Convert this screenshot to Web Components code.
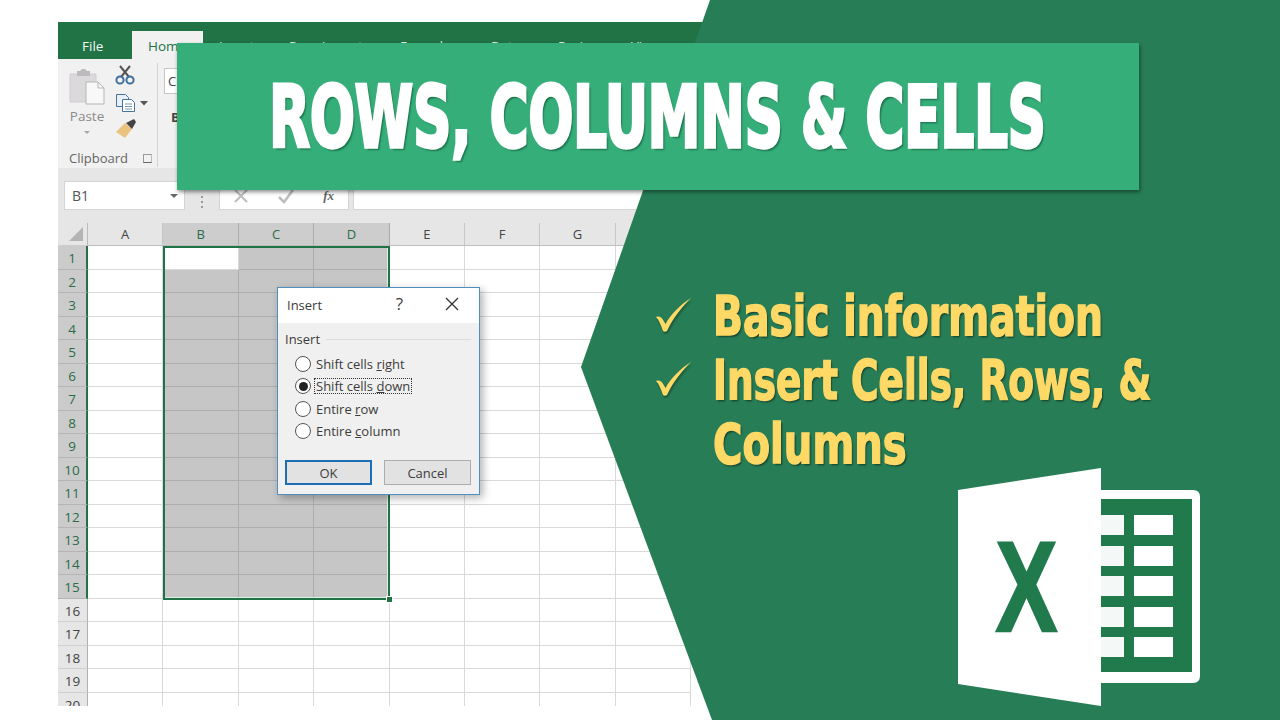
<!DOCTYPE html>
<html lang="en">
<head>
<meta charset="utf-8">
<title>Rows, Columns & Cells</title>
<style>
  html, body { margin: 0; padding: 0; background: #fff; }
  body { width: 1280px; height: 720px; overflow: hidden; font-family: "Liberation Sans", sans-serif; }
</style>
</head>
<body>
<x-thumbnail>
  <x-excel-window></x-excel-window>
  <x-insert-dialog></x-insert-dialog>
  <x-promo-panel>
    <x-check-item style="--squeeze:.78">Basic information</x-check-item>
    <x-check-item style="--squeeze:.745">Insert Cells, Rows, &amp;<br><span style="display:inline-block;transform:scaleX(1.07);transform-origin:0 0">Columns</span></x-check-item>
  </x-promo-panel>
  <x-title-banner>ROWS, COLUMNS &amp; CELLS</x-title-banner>
  <x-excel-logo></x-excel-logo>
</x-thumbnail>

<script>
/* the stage: a free canvas, the pieces overlap like in a slide */
class XThumbnail extends HTMLElement {
  constructor() {
    super();
    this.attachShadow({ mode: 'open' }).innerHTML = `
      <style>
        :host { display: block; position: relative; width: 1280px; height: 720px; overflow: hidden; background: #fff; }
      </style>
      <slot></slot>`;
  }
}

class XExcelWindow extends HTMLElement {
  constructor() {
    super();
    this.attachShadow({ mode: 'open' }).innerHTML = `
      <style>
        *, *::before, *::after { box-sizing: border-box; }
        :host {
          display: flex; flex-direction: column;
          width: 660px; height: 684px; margin: 22px 0 0 58px;
          font-family: "Open Sans", "Liberation Sans", sans-serif;
          color: #444; overflow: hidden; background: #fff;
        }
        #tabs { display: flex; height: 37px; flex: none; background: #217346; color: #e6f1ea; font-size: 13px; }
        #file { width: 74px; padding: 15px 0 0 24px; color: #f2f7f4; font-size: 13.5px; }
        #home { width: 71px; margin-top: 9px; padding: 6px 0 0 16px; background: #f1f1f1; color: #217346; font-size: 13.5px; }
        #others { display: flex; padding-top: 15px; font-size: 13px; }
        #others div { white-space: nowrap; }
        #ribbon { height: 109px; flex: none; display: flex; background: #f1f1f1; }
        #clip { width: 100px; height: 104px; border-right: 1px solid #d2d2d2; margin-top: 4px; display: grid; grid-template-columns: 52px 48px; grid-template-rows: 78px 1fr; }
        #paste { display: flex; flex-direction: column; align-items: center; padding: 5px 0 0 6px; font-size: 13.5px; line-height: 18px; color: #8b8b8b; }
        #paste svg { display: block; margin-bottom: 2px; }
        #arrow { width: 0; height: 0; margin-top: 6px; border: 3px solid transparent; border-top-color: #a8a8a8; }
        #tools svg { display: block; }
        #cliplabel { grid-column: 1 / 3; display: flex; justify-content: space-between; align-items: center; padding: 8px 6px 0 11px; font-size: 13px; color: #666; }
        #launch { width: 9px; height: 9px; border-left: 1px solid #999; border-top: 1px solid #999; border-right: 1px solid #bbb; border-bottom: 1px solid #666; }
        #font { padding: 9px 0 0 6px; font-size: 13px; }
        #fontbox { width: 40px; height: 26px; background: #fff; border: 1px solid #c6c6c6; padding: 3px 0 0 3px; }
        #bold { margin: 14px 0 0 7px; font-weight: 700; }
        #formula { height: 55px; flex: none; background: #e6e6e6; display: flex; padding: 13px 0 0 6px; }
        .box { height: 29px; background: #fff; border: 1px solid #d4d4d4; }
        #name { width: 121px; display: flex; justify-content: space-between; align-items: center; padding: 0 6px 0 7px; font-size: 14px; color: #555; }
        #name i { width: 0; height: 0; border: 4.5px solid transparent; border-top-color: #666; border-bottom: 0; }
        #dots { width: 34px; display: flex; flex-direction: column; align-items: center; justify-content: center; gap: 3px; }
        #dots b { width: 2px; height: 2px; background: #999; }
        #fx { width: 130px; display: flex; align-items: center; justify-content: space-between; padding: 0 14px 0 13px; color: #b9b9b9; }
        #fx em { font: italic 700 13px "Liberation Serif", serif; color: #666; }
        #input { margin-left: 4px; flex: 1; }
      </style>
      <div id="tabs">
        <div id="file">File</div>
        <div id="home">Home</div>
        <div id="others">
          <div style="width:70px;padding-left:16px">Insert</div>
          <div style="width:111px;padding-left:16px">Page Layout</div>
          <div style="width:91px;padding-left:16px">Formulas</div>
          <div style="width:67px;padding-left:16px">Data</div>
          <div style="width:73px;padding-left:16px">Review</div>
          <div style="padding-left:16px">View</div>
        </div>
      </div>
      <div id="ribbon">
        <div id="clip">
          <div id="paste">
            <svg width="36" height="37" viewBox="0 0 36 37">
              <path d="M1 6h26v28H1z" fill="#dcd9dc" stroke="#cfcdcf"/>
              <path d="M8 6V3h3l2-2h3l2 2h3v5H8z" fill="#bcbabc"/>
              <path d="M17 14h12l6 6v16H17z" fill="#f8f8f8" stroke="#b5b5b5"/>
              <path d="M29 14v6h6" fill="none" stroke="#b5b5b5"/>
            </svg>
            <div>Paste</div>
            <div id="arrow"></div>
          </div>
          <div id="tools">
            <svg width="48" height="78" viewBox="0 0 48 78">
              <g fill="none" stroke-width="2">
                <path d="M11 14 20 3M19 14 10 3" stroke="#555"/>
                <circle cx="10" cy="17" r="3.600" stroke="#3f6f9a"/><circle cx="20" cy="17" r="3.600" stroke="#3f6f9a"/>
              </g>
              <g fill="#fff" stroke="#44739c">
                <path d="M6.500 31.500h9l3 3v9h-12z" fill="#e8eff6"/>
                <path d="M12.500 36.500h9l3 3v9h-12z"/>
                <path d="M15 41h7M15 43.500h7M15 46h7" stroke="#7a97b3"/>
              </g>
              <path d="M30 38h8l-4 4.500z" fill="#555"/>
              <path d="M6 69l9-9 7 6-7 9z" fill="#ecc27f"/>
              <path d="M16 60l8-4 2 3-4 7z" fill="#444"/>
            </svg>
          </div>
          <div id="cliplabel"><span>Clipboard</span><span id="launch"></span></div>
        </div>
        <div id="font">
          <div id="fontbox">C</div>
          <div id="bold">B</div>
        </div>
      </div>
      <div id="formula">
        <div id="name" class="box">B1<i></i></div>
        <div id="dots"><b></b><b></b><b></b></div>
        <div id="fx" class="box">
          <svg width="16" height="16" viewBox="0 0 16 16"><path d="M2 2l12 12M14 2 2 14" stroke="#bdbdbd" stroke-width="2"/></svg>
          <svg width="18" height="16" viewBox="0 0 18 16"><path d="M2 9l5 5L16 2" fill="none" stroke="#bdbdbd" stroke-width="2.500"/></svg>
          <em>fx</em>
        </div>
        <div id="input" class="box"></div>
      </div>
      <x-sheet></x-sheet>`;
  }
}

/* spreadsheet: 8 columns, 20 rows, B1:D15 selected */
class XSheet extends HTMLElement {
  constructor() {
    super();
    let cells = '<div class="corner"><i></i></div>';
    const cols = ['A', 'B', 'C', 'D', 'E', 'F', 'G', 'H'];
    cols.forEach((c, i) => {
      const on = i > 0 && i < 4;
      cells += `<div class="colhead ${on ? 'on' : ''}">${c}</div>`;
    });
    for (let r = 1; r <= 20; r++) {
      cells += `<div class="rowhead ${r <= 15 ? 'on' : ''}">${r}</div>`;
      cols.forEach((c, i) => {
        const on = r <= 15 && i > 0 && i < 4 && !(r === 1 && i === 1);
        cells += `<div class="cell ${on ? 'on' : ''}"></div>`;
      });
    }
    this.attachShadow({ mode: 'open' }).innerHTML = `
      <style>
        *, *::before, *::after { box-sizing: border-box; }
        :host { display: block; flex: 1; position: relative; overflow: hidden; background: #fff; font-family: "Open Sans", "Liberation Sans", sans-serif; }
        #grid {
          display: grid;
          grid-template-columns: 30px repeat(8, 75.4px);
          grid-template-rows: 23px repeat(20, 23.5px);
        }
        .corner { background: #e6e6e6; border-right: 1px solid #bbb; border-bottom: 1px solid #ccc; position: relative; }
        .corner i { position: absolute; right: 4px; bottom: 4px; width: 0; height: 0; border-left: 14px solid transparent; border-bottom: 14px solid #b4b4b4; }
        .colhead { background: #e6e6e6; border-right: 1px solid #c6c6c6; border-bottom: 1px solid #bdbdbd; text-align: center; font-size: 13px; line-height: 22px; color: #444; }
        .colhead.on { background: #cdcdcd; color: #2b6b49; border-right-color: #ababab; }
        .rowhead { background: #e6e6e6; border-right: 1px solid #b0b0b0; border-bottom: 1px solid #d0d0d0; text-align: center; font-size: 13.5px; line-height: 24px; color: #444; }
        .rowhead.on { background: #cbcbcb; color: #2b6b49; border-right: 2px solid #217346; border-bottom-color: #b5b5b5; }
        .cell { border-right: 1px solid #d9d9d9; border-bottom: 1px solid #d9d9d9; }
        .cell.on { background: #c6c6c6; border-right-color: #adadad; border-bottom-color: #adadad; }
        #selection {
          position: absolute; left: 105px; top: 23px; width: 227.200px; height: 353.500px;
          border: 2px solid #217346; box-shadow: inset 0 -1px 0 #dcefe3, inset -1px 0 0 #dcefe3;
          pointer-events: none;
        }
        #handle { position: absolute; right: -5px; bottom: -5px; width: 7px; height: 7px; background: #217346; border: 1px solid #fff; box-sizing: content-box; width: 5px; height: 5px; }
      </style>
      <div id="grid">${cells}</div>
      <div id="selection"><div id="handle"></div></div>`;
  }
}

class XInsertDialog extends HTMLElement {
  constructor() {
    super();
    const options = [
      ['Shift cells ', 'r', 'ight', false],
      ['Shift cells ', 'd', 'own', true],
      ['Entire ', 'r', 'ow', false],
      ['Entire ', 'c', 'olumn', false]
    ];
    const rows = options.map(([a, u, b, on]) => `
      <div class="option ${on ? 'on' : ''}"><span class="radio"></span><span class="label">${a}<u>${u}</u>${b}</span></div>`).join('');
    this.attachShadow({ mode: 'open' }).innerHTML = `
      <style>
        *, *::before, *::after { box-sizing: border-box; }
        :host {
          box-sizing: border-box;
          display: flex; flex-direction: column; position: absolute; left: 277px; top: 287px; width: 203px; height: 208px;
          border: 1.500px solid #4f8fc0; background: #f0f0f0; color: #3c3c3c;
          box-shadow: 3px 3px 8px rgba(0,0,0,.3);
          font: 13px "Open Sans", "Liberation Sans", sans-serif;
        }
        #title { height: 35px; flex: none; background: #fff; display: flex; align-items: center; padding: 0 20px 0 9px; }
        #title b { font-weight: 400; flex: 1; position: relative; top: -1px; }
        #title i { font-style: normal; font-size: 17px; margin-right: 42px; position: relative; top: -2px; }
        #title svg { position: relative; top: -2px; }
        #body { flex: 1; display: flex; flex-direction: column; padding: 7px 8px 9px 7px; }
        #legend { display: flex; align-items: center; gap: 6px; height: 18px; }
        #legend::after { content: ""; flex: 1; height: 1px; background: #dcdcdc; }
        #options { display: flex; flex-direction: column; margin: 5px 0 0 10px; }
        .option { display: flex; align-items: center; height: 22.300px; gap: 4px; white-space: nowrap; font-size: 13px; }
        .radio { width: 16px; height: 16px; border-radius: 50%; background: #fff; border: 1px solid #555; flex: none; display: flex; align-items: center; justify-content: center; }
        .on .radio::after { content: ""; width: 9px; height: 9px; border-radius: 50%; background: #222; }
        .label { padding: 0 1px; line-height: 14px; }
        .on .label { outline: 1px dotted #333; }
        #buttons { margin-top: auto; display: flex; justify-content: space-between; }
        .btn { width: 87px; height: 25px; background: #e2e2e2; border: 1px solid #adadad; display: flex; align-items: center; justify-content: center; font-size: 13px; }
        .btn.def { border: 2px solid #1c6fb4; }
      </style>
      <div id="title"><b>Insert</b><i>?</i>
        <svg width="14" height="14" viewBox="0 0 14 14"><path d="M1 1l12 12M13 1 1 13" stroke="#333" stroke-width="1.300"/></svg>
      </div>
      <div id="body">
        <div id="legend">Insert</div>
        <div id="options">${rows}</div>
        <div id="buttons"><div class="btn def">OK</div><div class="btn">Cancel</div></div>
      </div>`;
  }
}

/* dark green arrow shaped panel on the right */
class XPromoPanel extends HTMLElement {
  constructor() {
    super();
    this.attachShadow({ mode: 'open' }).innerHTML = `
      <style>
        *, *::before, *::after { box-sizing: border-box; }
        :host {
          display: block; position: absolute; left: 581px; top: 0; width: 699px; height: 720px;
          background: #277e56;
          clip-path: polygon(129px 0, 100% 0, 100% 100%, 131px 100%, 0 367px);
        }
        #list { display: flex; flex-direction: column; padding: 284px 0 0 74px; }
      </style>
      <div id="list"><slot></slot></div>`;
  }
}

class XCheckItem extends HTMLElement {
  constructor() {
    super();
    this.attachShadow({ mode: 'open' }).innerHTML = `
      <style>
        :host { display: grid; grid-template-columns: 58px 1fr; }
        svg { margin-top: 12px; filter: drop-shadow(1px 2px 1px rgba(0,0,0,.35)); }
        #text {
          font: 700 56px/64px "DejaVu Sans Condensed", "DejaVu Sans", sans-serif;
          color: #ffd966; white-space: nowrap;
          -webkit-text-stroke: 1.500px #ffd966;
          text-shadow: 2px 2px 2px rgba(0,0,0,.45);
          transform: scaleX(var(--squeeze, .76)); transform-origin: 0 0;
        }
      </style>
      <svg width="38" height="38" viewBox="0 0 38 38"><path d="M1 21c3-1 5 0 6.500 2l3 5C16 18 25 9 36 2 26 12 18 22 12 35c-1 1-3 1-4 0C6 29 4 24 1 21z" fill="#ffd966"/></svg>
      <div id="text"><slot></slot></div>`;
  }
}

class XTitleBanner extends HTMLElement {
  constructor() {
    super();
    this.attachShadow({ mode: 'open' }).innerHTML = `
      <style>
        :host {
          display: flex; align-items: center; justify-content: center;
          position: absolute; left: 177px; top: 43px; width: 962px; height: 147px;
          background: #36ae7a; box-shadow: 1px 2px 4px rgba(0,0,0,.45);
        }
        #text {
          font: 700 86px/1 "DejaVu Sans Condensed", "DejaVu Sans", sans-serif;
          color: #fff; white-space: nowrap;
          -webkit-text-stroke: 3.500px #fff;
          text-shadow: 3px 3px 2px rgba(0,60,30,.5);
          transform: scaleX(.683);
        }
      </style>
      <div id="text"><slot></slot></div>`;
  }
}

class XExcelLogo extends HTMLElement {
  constructor() {
    super();
    let cells = '';
    [515, 546, 576, 607, 637].forEach(y => {
      cells += `<rect x="1101" y="${y}" width="23" height="20" fill="#f4f8f6"/>`;
      cells += `<rect x="1134" y="${y}" width="39" height="20" fill="#fff"/>`;
    });
    this.attachShadow({ mode: 'open' }).innerHTML = `
      <style>
        :host { display: block; position: absolute; left: 0; top: 0; width: 1280px; height: 720px; pointer-events: none; }
        svg { display: block; }
      </style>
      <svg width="1280" height="720" viewBox="0 0 1280 720">
        <path d="M1095 490h98q7 0 7 7v179q0 7-7 7h-98z" fill="#fff"/>
        <rect x="1101" y="499" width="91" height="173" fill="#217a4c"/>
        ${cells}
        <path d="M958 490 1101 468V706L958 684z" fill="#fff"/>
        <text transform="translate(1026.500 631) scale(.72 1)" text-anchor="middle" font-family="Liberation Sans" font-weight="700" font-size="128" fill="#217a4c" stroke="#217a4c" stroke-width="2.500">X</text>
      </svg>`;
  }
}

customElements.define('x-thumbnail', XThumbnail);
customElements.define('x-excel-window', XExcelWindow);
customElements.define('x-sheet', XSheet);
customElements.define('x-insert-dialog', XInsertDialog);
customElements.define('x-promo-panel', XPromoPanel);
customElements.define('x-check-item', XCheckItem);
customElements.define('x-title-banner', XTitleBanner);
customElements.define('x-excel-logo', XExcelLogo);
</script>
</body>
</html>
